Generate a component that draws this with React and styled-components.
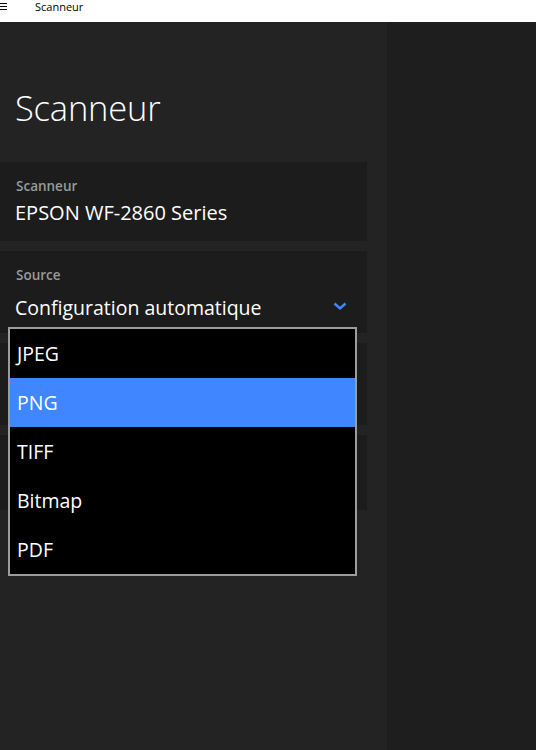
import React from "react";
import styled, { createGlobalStyle } from "styled-components";

const Global = createGlobalStyle`
  html, body { margin: 0; padding: 0; background: #1e1e1e; }
  body { font-family: "Open Sans", "Noto Sans", sans-serif; }
  * { box-sizing: border-box; }
`;

const Window = styled.div`
  width: 536px;
  height: 750px;
  display: flex;
  flex-direction: column;
  overflow: hidden;
`;

const TitleBar = styled.div`
  height: 22px;
  background: #ffffff;
  display: flex;
  align-items: center;
  color: #000;
  font-size: 11px;
  flex-shrink: 0;
`;

const Burger = styled.div`
  width: 35px;
  display: flex;
  align-items: flex-start;
  height: 100%;
  padding-top: 3px;
`;

const AppName = styled.span`
  line-height: 1;
  margin-top: -9px;
`;

const Main = styled.div`
  flex: 1;
  display: flex;
`;

const Panel = styled.div`
  position: relative;
  width: 387px;
  background: #232323;
  padding-top: 65px;
  display: flex;
  flex-direction: column;
`;

const Side = styled.div`
  flex: 1;
  background: #1e1e1e;
`;

const Heading = styled.h1`
  margin: 0 0 33px 15px;
  font-weight: 300;
  font-size: 34.5px;
  line-height: 42px;
  color: #ffffff;
  letter-spacing: -0.2px;
`;

const Cards = styled.div`
  display: flex;
  flex-direction: column;
  gap: 10px;
  width: 367px;
`;

const Card = styled.div`
  height: ${(p) => p.$h}px;
  background: #1c1c1c;
  padding: 14px 16px 0 16px;
`;

const Label = styled.div`
  font-size: 13.5px;
  font-weight: 600;
  color: #9a9a9a;
  line-height: 20px;
`;

const Value = styled.div`
  font-size: ${(p) => p.$fs || 20}px;
  color: #ffffff;
  line-height: 28px;
  margin-top: ${(p) => p.$mt || 0}px;
  margin-left: -1px;
  display: flex;
  align-items: center;
  justify-content: space-between;
`;

const Chevron = styled.svg`
  margin-right: 4px;
  margin-top: -4px;
`;

const Menu = styled.div`
  position: absolute;
  left: 8px;
  top: 305px;
  width: 349px;
  border: 2px solid #9c9c9c;
  background: #000;
  display: flex;
  flex-direction: column;
`;

const Item = styled.div`
  height: 49px;
  display: flex;
  align-items: center;
  padding-left: 7px;
  font-size: 19.5px;
  color: #fff;
  background: ${(p) => (p.$active ? "#3f86ff" : "transparent")};
`;

const items = ["JPEG", "PNG", "TIFF", "Bitmap", "PDF"];

export default function App() {
  return (
    <Window>
      <Global />
      <TitleBar>
        <Burger>
          <svg width="7" height="8" viewBox="0 0 7 8">
            <rect x="0" y="0" width="7" height="1" fill="#000" />
            <rect x="0" y="3" width="7" height="1" fill="#000" />
            <rect x="0" y="6" width="7" height="1" fill="#000" />
          </svg>
        </Burger>
        <AppName>Scanneur</AppName>
      </TitleBar>
      <Main>
        <Panel>
          <Heading>Scanneur</Heading>
          <Cards>
            <Card $h={79}>
              <Label>Scanneur</Label>
              <Value $mt={3}>EPSON WF-2860 Series</Value>
            </Card>
            <Card $h={82}>
              <Label>Source</Label>
              <Value $mt={9} $fs={19.5}>
                Configuration automatique
                <Chevron width="14" height="10" viewBox="0 0 14 10">
                  <path d="M1.5 2.5 L7 7.5 L12.5 2.5" fill="none" stroke="#3f86ff" strokeWidth="2.4" />
                </Chevron>
              </Value>
            </Card>
            <Card $h={82} />
            <Card $h={75} />
          </Cards>
          <Menu>
            {items.map((it) => (
              <Item key={it} $active={it === "PNG"}>
                {it}
              </Item>
            ))}
          </Menu>
        </Panel>
        <Side />
      </Main>
    </Window>
  );
}
